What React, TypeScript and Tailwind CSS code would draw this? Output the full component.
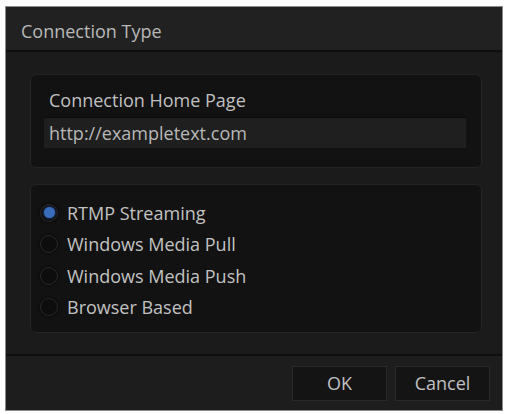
import React from "react";

function Radio({ label, checked }: { label: string; checked?: boolean }) {
  return (
    <div className="flex items-center h-[31.5px]">
      <div className="w-[18px] h-[18px] rounded-full border border-[#2a2a2a] bg-[#0d0d0d] flex items-center justify-center shadow-[0_0_3px_rgba(0,0,0,0.9)]">
        {checked && <div className="w-[11px] h-[11px] rounded-full bg-[#3a6cbc] shadow-[0_0_3px_#2d5aa0]" />}
      </div>
      <span className="ml-[9px] text-[18px] leading-none text-[#c2c2c2]">{label}</span>
    </div>
  );
}

export default function App() {
  return (
    <div className="w-[506px] h-[414px] bg-white relative overflow-hidden" style={{ fontFamily: '"Open Sans", "Noto Sans", sans-serif' }}>
      <div className="absolute left-[5px] top-[6px] w-[498px] h-[405px] border border-[#8a8a8a] bg-[#1b1b1b] flex flex-col">
        <div className="h-[45px] bg-[#212121] border-b-2 border-[#0f0f0f] flex items-center pl-[15px] pt-[4px]">
          <span className="text-[18px] leading-none text-[#b8b8b8]">Connection Type</span>
        </div>
        <div className="flex-1 flex flex-col pl-[24px] pr-[20px] pt-[22px]">
          <div className="h-[94px] rounded-[6px] bg-[#121212] border border-[#242424] pl-[13px] pr-[15px] flex flex-col">
            <div className="h-[42px] flex items-center pl-[5px] pt-[7px]">
              <span className="text-[18px] leading-none text-[#c0c0c0]">Connection Home Page</span>
            </div>
            <div className="h-[31px] bg-[#1f1f1f] border-t border-[#0a0a0a] flex items-center pl-[5px]">
              <span className="text-[18px] leading-none text-[#b8b8b8]">http://exampletext.com</span>
            </div>
          </div>
          <div className="mt-[16px] h-[149px] rounded-[6px] bg-[#121212] border border-[#242424] pl-[9px] pt-[12px] flex flex-col">
            <Radio label="RTMP Streaming" checked />
            <Radio label="Windows Media Pull" />
            <Radio label="Windows Media Push" />
            <Radio label="Browser Based" />
          </div>
        </div>
        <div className="h-[56px] border-t-2 border-[#0f0f0f] bg-[#1d1d1d] flex items-center justify-end gap-[8px] pr-[12px]">
          <button className="w-[95px] h-[35px] bg-[#141414] border border-[#2a2a2a] text-[18px] leading-none text-[#c0c0c0]">OK</button>
          <button className="w-[95px] h-[35px] bg-[#141414] border border-[#2a2a2a] text-[18px] leading-none text-[#c0c0c0]">Cancel</button>
        </div>
      </div>
    </div>
  );
}
